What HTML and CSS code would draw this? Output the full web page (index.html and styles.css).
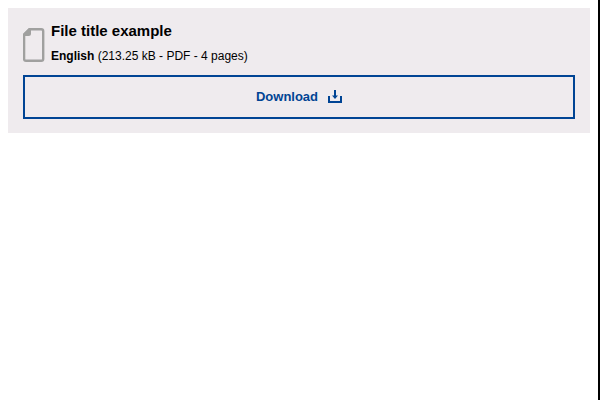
FILE: index.html
```
<!DOCTYPE html>
<html lang="en">
<head>
<meta charset="utf-8">
<title>File title example</title>
<link rel="stylesheet" href="styles.css">
</head>
<body>
<section class="file">
  <div class="file-info">
    <svg class="file-icon" viewBox="0 0 22 34" aria-hidden="true">
      <path d="M6.500 1.200H18.300Q20.200 1.200 20.200 3V31Q20.200 32.800 18.300 32.800H2.900Q1.100 32.800 1.100 31V6.500Z"/>
      <path class="fold" d="M6 0H8V5.500Q8 8 5.500 8H0V6Z"/>
    </svg>
    <div class="file-text">
      <h2 class="file-title">File title example</h2>
      <p class="file-meta"><strong>English</strong> (213.25 kB - PDF - 4 pages)</p>
    </div>
  </div>
  <button class="download" type="button">
    <span>Download</span>
    <svg class="download-icon" viewBox="0 0 14 14" aria-hidden="true">
      <path class="tray" d="M1 6V12H13V6"/>
      <path class="tray" d="M7 0V7"/>
      <path class="arrow" d="M4 5.500H10L7 9Z"/>
    </svg>
  </button>
</section>
</body>
</html>
```
FILE: styles.css
```
* {
  box-sizing: border-box;
}

body {
  margin: 0;
  min-height: 100vh;
  padding: 8px;
  border-right: 2px solid #000;
  background: #fff;
  color: #000;
  font-family: "Liberation Sans", Arial, sans-serif;
}

.file {
  padding: 14px 15px;
  background: #efebee;
}

.file-info {
  display: flex;
  align-items: center;
  gap: 6px;
  margin-bottom: 11px;
}

.file-icon {
  flex: none;
  width: 22px;
  height: 34px;
  margin-top: 4px;
  fill: none;
  stroke: #a0a09f;
  stroke-width: 2.4;
}

.file-icon .fold {
  fill: #a0a09f;
  stroke: none;
}

.file-title {
  margin: 0 0 8px;
  font-size: 15px;
  line-height: 18px;
}

.file-meta {
  margin: 0;
  font-size: 12px;
  line-height: 16px;
}

.download {
  display: flex;
  align-items: center;
  justify-content: center;
  gap: 10px;
  width: 100%;
  height: 44px;
  padding: 0;
  border: 2px solid #004494;
  background: transparent;
  color: #004494;
  font: bold 13px/16px "Liberation Sans", Arial, sans-serif;
}

.download-icon {
  width: 14px;
  height: 14px;
}

.tray {
  fill: none;
  stroke: #004494;
  stroke-width: 2;
}

.arrow {
  fill: #004494;
}
```
